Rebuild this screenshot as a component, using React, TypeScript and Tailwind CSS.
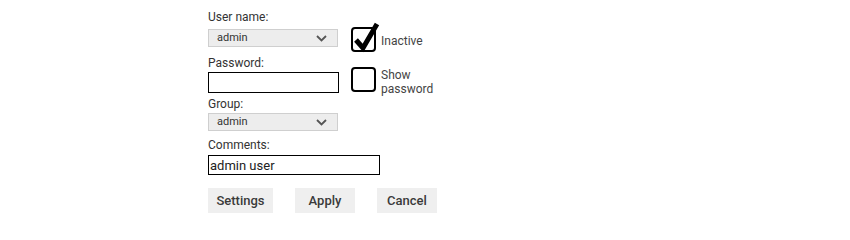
import React from "react";

const Chevron = () => (
  <svg width="11" height="7" viewBox="0 0 11 7" className="text-[#555]">
    <path d="M1 1 L5.5 5.5 L10 1" fill="none" stroke="currentColor" strokeWidth="1.8" />
  </svg>
);

const Select = ({ value }: { value: string }) => (
  <div className="flex h-[18px] w-[130px] items-center justify-between border border-[#cfcfcf] bg-[#ededed] pl-[8px] pr-[10px] text-[11px] text-[#333]">
    <span>{value}</span>
    <Chevron />
  </div>
);

const Check = ({ checked }: { checked?: boolean }) => (
  <div className="relative h-[25px] w-[25px] shrink-0 rounded-[4px] border-2 border-black bg-white">
    {checked && (
      <svg width="28" height="32" viewBox="0 0 28 32" className="absolute -top-[7px] left-[1px]">
        <path d="M2 18 L9 26 L23 2" fill="none" stroke="black" strokeWidth="5" strokeLinejoin="miter" />
      </svg>
    )}
  </div>
);

const Btn = ({ children, w }: { children: React.ReactNode; w: string }) => (
  <button className={`h-[25px] ${w} bg-[#efefef] text-[13px] font-medium text-[#3a3a3a]`}>
    {children}
  </button>
);

export default function App() {
  return (
    <div className="min-h-[224px] w-[850px] bg-white pl-[208px] pt-[10px] font-['Roboto',sans-serif] text-[#333]">
      <div className="flex">
        <div className="w-[131px]">
          <div className="text-[12px] leading-[14px]">User name:</div>
          <div className="mt-[5px]">
            <Select value="admin" />
          </div>
          <div className="mt-[9px] text-[12px] leading-[14px]">Password:</div>
          <input type="password" className="mt-[2px] block h-[21px] w-[131px] border-[1.5px] border-black bg-white outline-none" />
          <div className="mt-[4px] text-[12px] leading-[14px]">Group:</div>
          <div className="mt-[2px]">
            <Select value="admin" />
          </div>
        </div>
        <div className="ml-[12px] mt-[17px] flex flex-col gap-[15px]">
          <div className="flex items-center gap-[5px]">
            <Check checked />
            <span className="mt-[2px] text-[12px] leading-[14px] text-[#444]">Inactive</span>
          </div>
          <div className="flex items-start gap-[5px]">
            <Check />
            <span className="mt-[1px] text-[12px] leading-[14px] text-[#444]">
              Show
              <br />
              password
            </span>
          </div>
        </div>
      </div>
      <div className="mt-[7px] text-[12px] leading-[14px]">Comments:</div>
      <input
        type="text"
        defaultValue="admin user"
        className="mt-[3px] block h-[20px] w-[172px] border-[1.5px] border-black bg-white px-[1px] text-[13px] text-[#222] outline-none"
      />
      <div className="mt-[13px] flex gap-[22px]">
        <Btn w="w-[65px]">Settings</Btn>
        <Btn w="w-[60px]">Apply</Btn>
        <Btn w="w-[60px]">Cancel</Btn>
      </div>
    </div>
  );
}
